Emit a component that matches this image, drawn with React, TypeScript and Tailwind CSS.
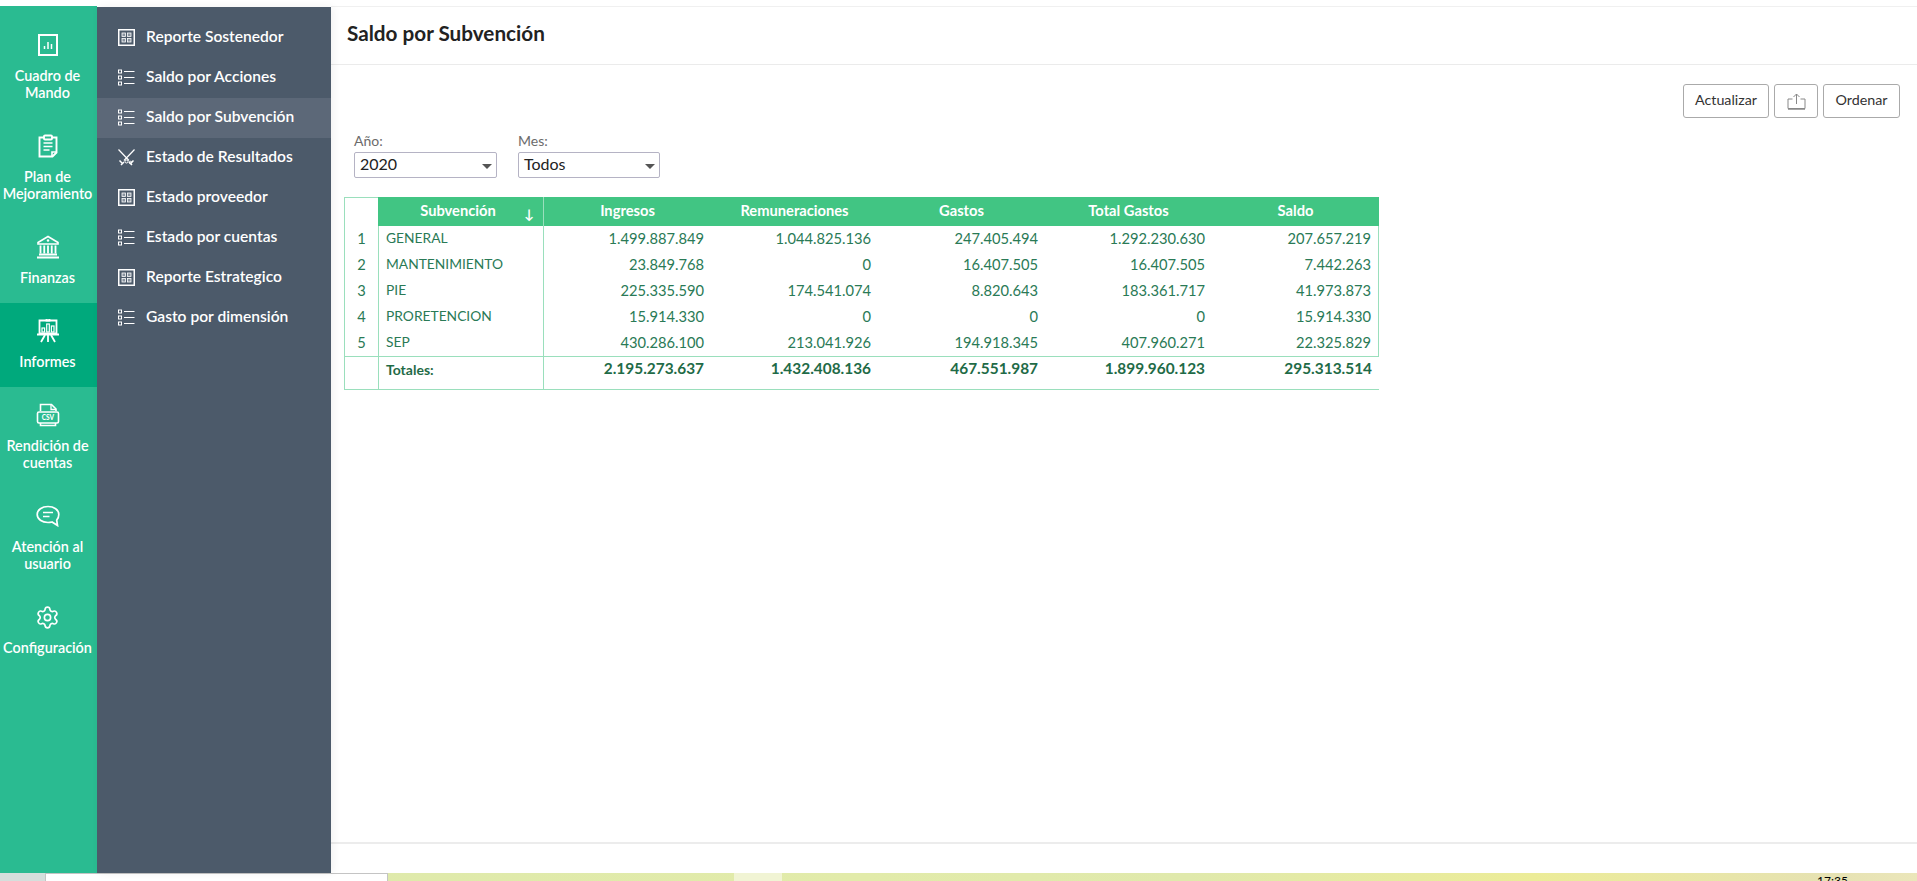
import React from "react";
import { Settings } from "lucide-react";

const IconCuadro = () => (
  <svg width="22" height="24" viewBox="0 0 22 24" fill="none" stroke="white" strokeWidth="2">
    <rect x="2" y="2" width="18" height="20" />
    <path d="M7.5 16v-3M11 16V9M14.5 16v-5" strokeWidth="1.5" />
  </svg>
);

const IconPlan = () => (
  <svg width="22" height="24" viewBox="0 0 22 24" fill="none" stroke="white" strokeWidth="1.9">
    <path d="M7 3.500H2.500v19h13l4-4v-15H15" />
    <rect x="7" y="1.500" width="8" height="4" rx="1" />
    <path d="M6.500 9h9M6.500 12.500h9M6.500 16h6M15 22v-4h4" strokeWidth="1.6" />
  </svg>
);

const IconBank = () => (
  <svg width="24" height="24" viewBox="0 0 24 24" fill="none" stroke="white" strokeWidth="1.6">
    <path d="M12 1.500 2 7.500v1.500h20V7.500z" />
    <path d="M4.500 10.500v8M8.250 10.500v8M12 10.500v8M15.750 10.500v8M19.500 10.500v8" strokeWidth="1.800" />
    <path d="M3 19.500h18M1 22.500h22" strokeWidth="1.800" />
    <circle cx="12" cy="5.500" r="1.200" fill="white" stroke="none" />
  </svg>
);

const IconBoard = () => (
  <svg width="24" height="26" viewBox="0 0 24 26" fill="none" stroke="white" strokeWidth="1.8">
    <path d="M3.500 2.500h17v13h-17zM1 16.500h22" />
    <path d="M10.500 1v1.500h3V1" />
    <rect x="6" y="10" width="2.600" height="4" strokeWidth="1.200" />
    <rect x="10.700" y="6" width="2.600" height="8" strokeWidth="1.200" />
    <rect x="15.400" y="8" width="2.600" height="6" strokeWidth="1.200" />
    <path d="M12 17v7M9 17l-4 7M15 17l4 7" />
  </svg>
);

const IconCsv = () => (
  <svg width="24" height="24" viewBox="0 0 24 24" fill="none" stroke="white" strokeWidth="1.6">
    <path d="M4.500 8V1.500H15.500L20 6V8" />
    <path d="M15 1.500V6.500H20" strokeWidth="1.300" />
    <rect x="1.500" y="9" width="21" height="11" rx="1.500" />
    <path d="M4.500 20v2.500h15V20" />
    <text x="12" y="17" textAnchor="middle" fontSize="6.500" fontWeight="900" fill="white" stroke="none" fontFamily="Lato, sans-serif">
      CSV
    </text>
  </svg>
);

const IconChat = () => (
  <svg width="24" height="22" viewBox="0 0 24 22" fill="none" stroke="white" strokeWidth="1.700">
    <path d="M12 1.500C6 1.500 1.200 4.900 1.200 9.500S6 17.500 12 17.500c1.400 0 2.700-.2 4-.5l5.500 3.500-.8-5.300c1.300-1.400 2.100-3.300 2.100-5.700 0-4.600-4.800-8-10.800-8z" />
    <path d="M7 7.500h10M7 11.500h6.500" />
  </svg>
);

const IconGrid = () => (
  <svg width="17" height="17" viewBox="0 0 17 17" fill="none" stroke="white">
    <rect x="0.750" y="0.750" width="15.500" height="15.500" strokeWidth="1.500" />
    <rect x="4" y="4" width="3.500" height="3.500" fill="#8a94a0" strokeWidth="0.800" />
    <rect x="9.500" y="4" width="3.500" height="3.500" fill="#8a94a0" strokeWidth="0.800" />
    <rect x="4" y="9.500" width="3.500" height="3.500" fill="#8a94a0" strokeWidth="0.800" />
    <rect x="9.500" y="9.500" width="3.500" height="3.500" fill="#8a94a0" strokeWidth="0.800" />
  </svg>
);

const IconList = () => (
  <svg width="17" height="17" viewBox="0 0 17 17" fill="none" stroke="white">
    <rect x="0.500" y="1" width="3" height="3" strokeWidth="1" />
    <rect x="0.500" y="7" width="3" height="3" strokeWidth="1" />
    <rect x="0.500" y="13" width="3" height="3" strokeWidth="1" />
    <path d="M6 2.500h10.500M6 8.500h10.500M6 14.500h10.500" strokeWidth="1" />
  </svg>
);

const IconSwords = () => (
  <svg width="17" height="17" viewBox="0 0 17 17" fill="none" stroke="white" strokeWidth="1.200">
    <path d="M0.500 0.500 11 11.500M16.500 0.500 6 11.500" />
    <path d="M1.500 11.500 5 15M3 16l3-3M15.500 11.500 12 15M14 16l-3-3" strokeWidth="1.500" />
    <circle cx="8.500" cy="12.500" r="1.500" strokeWidth="1" />
    <circle cx="12.500" cy="13.500" r="1.200" strokeWidth="1" />
  </svg>
);

const sideItems = [
  { label: ["Cuadro de", "Mando"], icon: <IconCuadro /> },
  { label: ["Plan de", "Mejoramiento"], icon: <IconPlan /> },
  { label: ["Finanzas"], icon: <IconBank /> },
  { label: ["Informes"], icon: <IconBoard />, active: true },
  { label: ["Rendición de", "cuentas"], icon: <IconCsv /> },
  { label: ["Atención al", "usuario"], icon: <IconChat /> },
  { label: ["Configuración"], icon: <Settings size={25} strokeWidth={1.6} color="white" /> },
];

const menuItems = [
  { label: "Reporte Sostenedor", icon: <IconGrid /> },
  { label: "Saldo por Acciones", icon: <IconList /> },
  { label: "Saldo por Subvención", icon: <IconList />, active: true },
  { label: "Estado de Resultados", icon: <IconSwords /> },
  { label: "Estado proveedor", icon: <IconGrid /> },
  { label: "Estado por cuentas", icon: <IconList /> },
  { label: "Reporte Estrategico", icon: <IconGrid /> },
  { label: "Gasto por dimensión", icon: <IconList /> },
];

const rows = [
  ["GENERAL", "1.499.887.849", "1.044.825.136", "247.405.494", "1.292.230.630", "207.657.219"],
  ["MANTENIMIENTO", "23.849.768", "0", "16.407.505", "16.407.505", "7.442.263"],
  ["PIE", "225.335.590", "174.541.074", "8.820.643", "183.361.717", "41.973.873"],
  ["PRORETENCION", "15.914.330", "0", "0", "0", "15.914.330"],
  ["SEP", "430.286.100", "213.041.926", "194.918.345", "407.960.271", "22.325.829"],
];

const totals = ["2.195.273.637", "1.432.408.136", "467.551.987", "1.899.960.123", "295.313.514"];
const headers = ["Ingresos", "Remuneraciones", "Gastos", "Total Gastos", "Saldo"];

const Select = ({ label, value, width }: { label: string; value: string; width: string }) => (
  <div className={`flex flex-col ${width}`}>
    <span className="h-5 text-[14px] leading-[18px] text-[#6b6b6b]">{label}</span>
    <div className="flex h-[26px] items-center justify-between rounded-[2px] border border-[#b5b3c4] pl-[5px] pr-[4px] text-[16px] text-[#222]">
      <span className="mb-[2px]">{value}</span>
      <span className="mt-[2px] h-0 w-0 border-x-[5px] border-t-[5px] border-x-transparent border-t-[#555]"></span>
    </div>
  </div>
);

export default function App() {
  return (
    <div className="flex h-[881px] w-[1917px] flex-col overflow-hidden bg-white font-['Lato','Liberation_Sans',sans-serif]">
      <div className="h-[6px] shrink-0 bg-white"></div>

      <div className="flex min-h-0 flex-1">
        <nav className="flex w-[97px] shrink-0 flex-col bg-[#2abb91] pt-[11px] text-white">
          {sideItems.map((item) => (
            <div
              key={item.label[0]}
              className={`flex flex-col items-center pr-[2px] pt-[16px] ${item.label.length > 1 ? "h-[101px]" : "h-[84px]"} ${item.active ? "bg-[#00a97c]" : ""}`}
            >
              <div className="flex h-[24px] items-center justify-center">{item.icon}</div>
              <div className="mt-[10px] whitespace-nowrap text-center text-[14.4px] font-semibold leading-[17px]">
                {item.label.map((line) => (
                  <div key={line}>{line}</div>
                ))}
              </div>
            </div>
          ))}
        </nav>

        <aside className="relative z-10 mt-px flex w-[234px] shrink-0 flex-col bg-[#4c5a6a] pt-[11px] shadow-[2px_0_8px_rgba(0,0,0,0.06)]">
          {menuItems.map((item) => (
            <div
              key={item.label}
              className={`flex h-10 items-center gap-[11px] pl-[21px] text-[15.6px] font-semibold text-white ${item.active ? "bg-[#5c6878]" : ""}`}
            >
              <span className="mb-[2px] flex">{item.icon}</span>
              <span className="mb-[3px]">{item.label}</span>
            </div>
          ))}
        </aside>

        <main className="flex min-w-0 flex-1 flex-col border-t border-[#f0f0f0]">
          <header className="flex h-[58px] shrink-0 items-center border-b border-[#ebebeb] pb-[4px] pl-[16px] text-[20.7px] font-bold text-[#222]">
            Saldo por Subvención
          </header>

          <div className="min-h-0 flex-1">
            <div className="flex justify-end gap-[5px] pr-[17px] pt-[19px]">
              <button className="h-[34px] w-[86px] rounded-[3px] border border-[#aaa] pb-[2px] text-[14.3px] text-[#333]">Actualizar</button>
              <button className="flex h-[34px] w-[44px] items-center justify-center rounded-[3px] border border-[#aaa]">
                <svg width="19" height="17" viewBox="0 0 19 17" fill="none" stroke="#888">
                  <path d="M5.500 6H1v9.500h17V6h-4.500M9.500 11V1M6.500 4l3-3 3 3" />
                  <path d="M1 16h17" strokeWidth="1.500" />
                </svg>
              </button>
              <button className="h-[34px] w-[77px] rounded-[3px] border border-[#aaa] pb-[2px] text-[14.3px] text-[#333]">Ordenar</button>
            </div>

            <div className="ml-[23px] mt-[14px] flex gap-[21px]">
              <Select label="Año:" value="2020" width="w-[143px]" />
              <Select label="Mes:" value="Todos" width="w-[142px]" />
            </div>

            <table className="ml-[13px] mt-[19px] w-[1035px] table-fixed border-separate border-spacing-0 text-[14.7px] text-[#2a7a56]">
              <colgroup>
                <col className="w-[34px]" />
                <col className="w-[166px]" />
                <col className="w-[167px]" />
                <col className="w-[167px]" />
                <col className="w-[167px]" />
                <col className="w-[167px]" />
                <col className="w-[167px]" />
              </colgroup>
              <thead>
                <tr className="h-[29px]">
                  <th className="border-l border-t border-[#9adfbc]"></th>
                  <th className="relative border-r border-[#9adfbc] bg-[#41c583] pb-[2px] pr-[5px] font-bold text-white">
                    Subvención
                    <span className="absolute right-[9px] top-[9px] text-[13px] leading-4">↓</span>
                  </th>
                  {headers.map((h) => (
                    <th key={h} className="bg-[#41c583] pb-[2px] font-bold text-white">
                      {h}
                    </th>
                  ))}
                </tr>
              </thead>
              <tbody>
                {rows.map((r, i) => (
                  <tr key={r[0]} className="h-[26px]">
                    <td className="border-l border-[#9adfbc] pb-[2px] text-center">{i + 1}</td>
                    <td className="border-l border-r border-[#9adfbc] border-l-dotted pb-[2px] pl-[7px] text-[13.8px]">{r[0]}</td>
                    {r.slice(1).map((v, j) => (
                      <td key={j} className={`pb-[2px] pr-[7px] text-right ${j === 4 ? "border-r border-[#9adfbc]" : ""}`}>
                        {v}
                      </td>
                    ))}
                  </tr>
                ))}
                <tr className="h-[34px] font-bold text-[#1f6b47]">
                  <td className="border-b border-l border-t border-[#9adfbc] border-t-dotted"></td>
                  <td className="border-b border-l border-r border-t border-[#9adfbc] border-l-dotted border-t-dotted pb-[8px] pl-[7px] text-[14px]">Totales:</td>
                  {totals.map((v) => (
                    <td key={v} className="border-b border-t border-[#9adfbc] border-t-dotted pb-[8px] pr-[7px] text-right text-[15.4px]">
                      {v}
                    </td>
                  ))}
                </tr>
              </tbody>
            </table>
          </div>

          <div className="h-[31px] shrink-0 border-t-2 border-[#ececec]"></div>
        </main>
      </div>

      <div className="flex h-[8px] shrink-0 bg-[linear-gradient(90deg,#dde9ac_0%,#e2ebaa_45%,#e0e9ac_62%,#ecec98_80%,#e6e2b2_95%,#ebe6ba_100%)]">
        <div className="h-full w-[45px] bg-[#d5dfdc]"></div>
        <div className="h-full w-[343px] border-t border-x border-[#c4c4c4] bg-white"></div>
        <div className="ml-[346px] h-full w-[48px] bg-[#f1f4d4]"></div>
        <div className="ml-[1035px] overflow-hidden text-[12px] leading-[16px] text-black">17:35</div>
      </div>
    </div>
  );
}
